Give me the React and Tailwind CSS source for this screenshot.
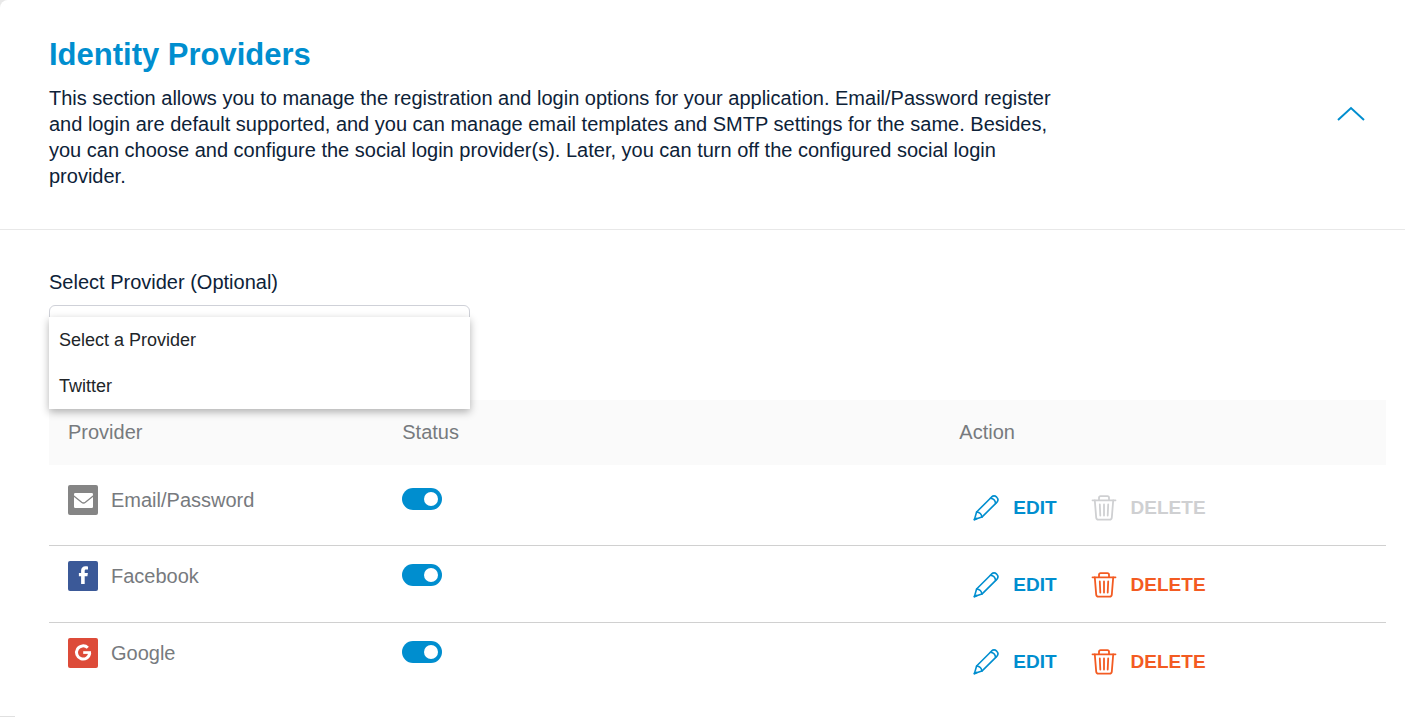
import React, { useState } from "react";

function PencilIcon() {
  return (
    <svg viewBox="0 0 26 26" className="h-[26px] w-[26px]" fill="none" stroke="currentColor" strokeWidth="1.6" strokeLinejoin="round" strokeLinecap="round" aria-hidden="true">
      <path d="M1.4 24.6 L3.6 17 L18.4 2.2 C20 .7 22.2 .8 23.7 2.2 C25.2 3.7 25.2 5.9 23.8 7.4 L8.9 22.1 Z" />
      <path d="M3.6 17 C6.6 17.2 8.6 19.2 8.9 22.1 M17.4 3.3 C20.2 3.6 22.3 5.7 22.6 8.5" />
      <path d="M1.5 24.5 L3.6 23.6" strokeWidth="2" />
    </svg>
  );
}

function TrashIcon() {
  return (
    <svg viewBox="0 0 26 26" className="h-[26px] w-[26px]" fill="none" stroke="currentColor" strokeWidth="1.8" strokeLinejoin="round" strokeLinecap="round" aria-hidden="true">
      <path d="M1.5 5.3 H24.5" />
      <path d="M8 5 V2.8 Q8 1.2 9.6 1.2 H16.4 Q18 1.2 18 2.8 V5" />
      <path d="M3.8 5.5 L5.2 22.6 Q5.4 24.6 7.4 24.6 H18.6 Q20.6 24.6 20.8 22.6 L22.2 5.5" />
      <path d="M8.8 9.5 L9.3 20.5 M13 9.5 V20.5 M17.2 9.5 L16.7 20.5" />
    </svg>
  );
}

function MailLogo() {
  return (
    <svg viewBox="0 0 30 30" className="h-[30px] w-[30px]" aria-hidden="true">
      <rect width="30" height="30" rx="2" fill="#858585" />
      <rect x="6" y="8" width="19" height="15" rx="1.2" fill="#fff" />
      <path d="M5.5 10.8 L13.6 17.3 Q15.5 18.7 17.4 17.3 L25.5 10.8" fill="none" stroke="#858585" strokeWidth="1.3" />
    </svg>
  );
}

function FacebookLogo() {
  return (
    <svg viewBox="0 0 30 30" className="h-[30px] w-[30px]" aria-hidden="true">
      <rect width="30" height="30" rx="2" fill="#3b5998" />
      <path d="M20 5.4 V8.5 H18.1 C16.9 8.5 16.7 9.1 16.7 10 V12 H19.9 L19.4 15.2 H16.7 V23 H13.1 V15.2 H10.9 V12 H13.1 V9.5 C13.1 6.8 14.9 5.2 17.4 5.2 C18.6 5.2 19.6 5.3 20 5.4 Z" fill="#fff" />
    </svg>
  );
}

function GoogleLogo() {
  return (
    <svg viewBox="0 0 30 30" className="h-[30px] w-[30px]" aria-hidden="true">
      <rect width="30" height="30" rx="2" fill="#dd4b39" />
      <path d="M19.8 9.8 A6.6 6.6 0 1 0 21.7 14.9" fill="none" stroke="#fff" strokeWidth="3" />
      <path d="M15.2 13.2 H23 V15.9 H15.2 Z" fill="#fff" />
    </svg>
  );
}

const providers = [
  { name: "Email/Password", Logo: MailLogo, locked: true },
  { name: "Facebook", Logo: FacebookLogo, locked: false },
  { name: "Google", Logo: GoogleLogo, locked: false },
];

function Toggle({ label }) {
  const [on, setOn] = useState(true);
  return (
    <input
      type="checkbox"
      role="switch"
      aria-label={label}
      checked={on}
      onChange={() => setOn(!on)}
      className="flex h-[22px] w-10 cursor-pointer appearance-none items-center rounded-full bg-gray-400 px-1 before:block before:h-[14px] before:w-[14px] before:rounded-full before:bg-white checked:justify-end checked:bg-[#008ecf]"
    />
  );
}

function ProviderRow({ name, Logo, locked }) {
  return (
    <tr className="group border-b border-[#d0d0d0] align-top last:border-b-0">
      <td className="px-[19px] pt-[15px] group-first:pt-5">
        <div className="flex items-center gap-[13px] text-[#777a7e]">
          <Logo />
          <span>{name}</span>
        </div>
      </td>
      <td className="px-[19px] pt-[15px] group-first:pt-5">
        <div className="flex h-7 items-center">
          <Toggle label={name + " status"} />
        </div>
      </td>
      <td className="px-[19px] pt-[25px] pb-[23px] group-first:pt-[29px]">
        <div className="flex items-center gap-[34px] pl-[14px] text-[19px] leading-7 font-bold">
          <button type="button" className="flex items-center gap-[14px] text-[#008ecf]">
            <PencilIcon />
            EDIT
          </button>
          <button type="button" disabled={locked} className="flex items-center gap-[14px] text-[#f35b22] disabled:text-[#cfd0d2]">
            <TrashIcon />
            DELETE
          </button>
        </div>
      </td>
    </tr>
  );
}

export default function App() {
  return (
    <div className="bg-[#e8e8e8] font-['Liberation_Sans',Arial,sans-serif] text-xl text-[#13294b]">
      <main className="min-h-screen rounded-tl-lg bg-white">
        <header className="flex items-center justify-between border-b border-[#e8e8e8] pt-[37px] pr-10 pb-10 pl-[49px]">
          <div className="max-w-[1010px]">
            <h1 className="text-[31px] leading-9 font-bold text-[#008ecf]">Identity Providers</h1>
            <p className="mt-3 leading-[26px] text-[#0d2238]">
              This section allows you to manage the registration and login options for your application. Email/Password register and login are default supported, and you can manage email templates and SMTP settings for the same. Besides, you can choose and configure the social login provider(s). Later, you can turn off the configured social login provider.
            </p>
          </div>
          <button type="button" aria-label="Collapse section" className="text-[#008ecf]">
            <svg viewBox="0 0 28 16" className="h-4 w-7" fill="none" stroke="currentColor" strokeWidth="2" aria-hidden="true">
              <path d="M1 15 L14 3 L27 15" />
            </svg>
          </button>
        </header>

        <section className="pt-[39px] pr-[19px] pl-[49px]">
          <label htmlFor="provider" className="block leading-[26px] text-[#0d2238]">
            Select Provider (Optional)
          </label>
          <div className="relative mt-[10px] h-[95px] w-[421px]">
            <select id="provider" className="h-[50px] w-full appearance-none rounded-md border border-[#cfd1d8] bg-white px-[10px] text-lg text-transparent">
              <option>Select a Provider</option>
              <option>Twitter</option>
            </select>
            <ul role="listbox" aria-label="Providers" className="absolute top-3 left-0 z-10 w-full bg-white text-lg text-[#212529] shadow-[0_3px_8px_rgba(0,0,0,0.3)]">
              <li role="option" aria-selected="true" className="px-[10px] py-[9px]">Select a Provider</li>
              <li role="option" aria-selected="false" className="px-[10px] py-[9px]">Twitter</li>
            </ul>
          </div>

          <table className="w-full table-fixed border-collapse text-left">
            <thead className="bg-[#fafafa] text-[#777a7e]">
              <tr>
                <th className="w-3/12 px-[19px] pt-[18px] pb-[19px] font-normal">Provider</th>
                <th className="w-5/12 px-[19px] pt-[18px] pb-[19px] font-normal">Status</th>
                <th className="w-4/12 px-[19px] pt-[18px] pb-[19px] font-normal">Action</th>
              </tr>
            </thead>
            <tbody>
              {providers.map((p) => (
                <ProviderRow key={p.name} {...p} />
              ))}
            </tbody>
          </table>
        </section>
        <div className="mt-[17px] w-[15px] border-t border-[#e0e0e0]" />
      </main>
    </div>
  );
}
